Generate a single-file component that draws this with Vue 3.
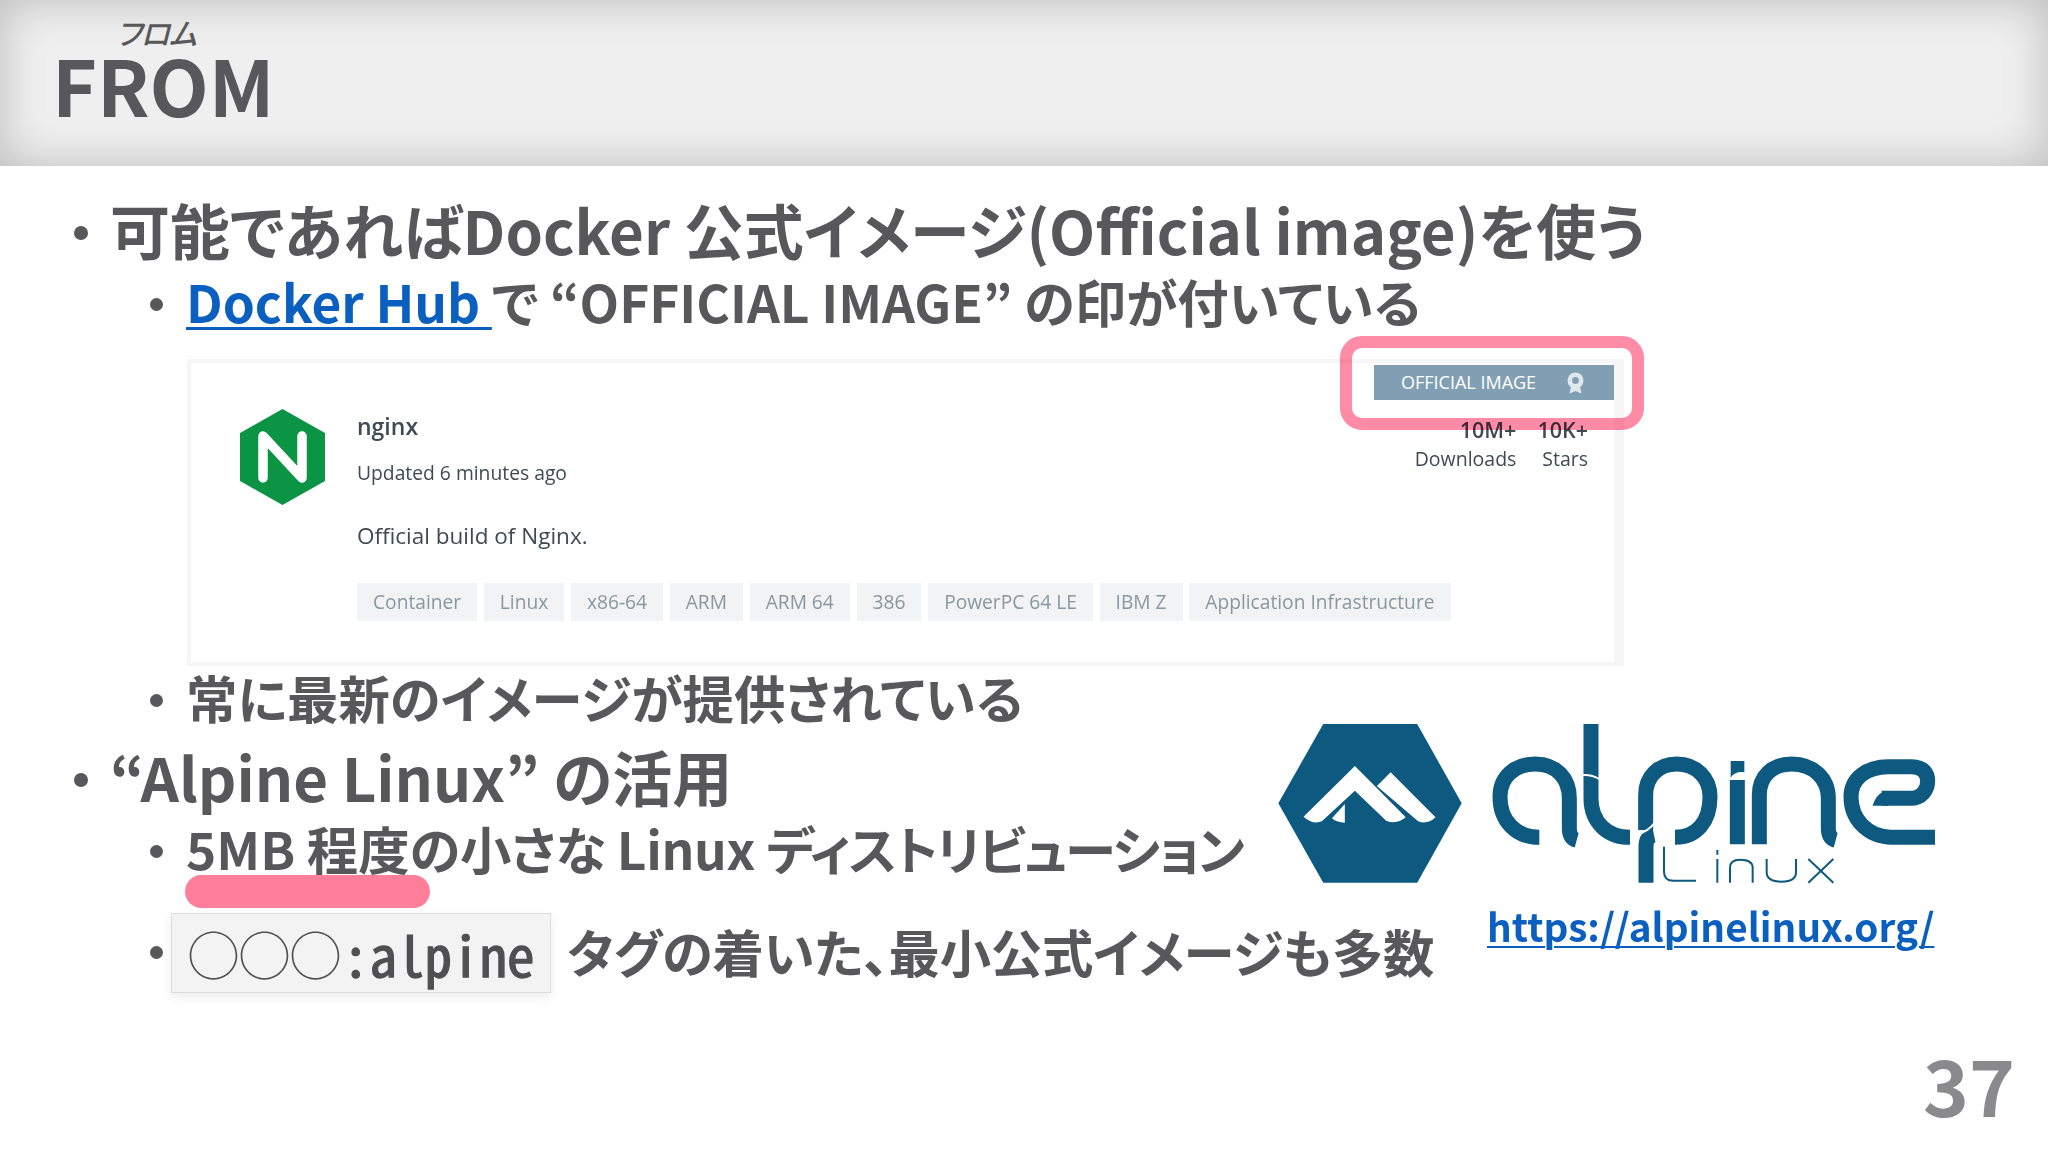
<script setup>
const tags = ['Container','Linux','x86-64','ARM','ARM 64','386','PowerPC 64 LE','IBM Z','Application Infrastructure']
</script>

<template>
  <div class="slide">
    <header class="head">
      <h1><ruby>FROM<rt>フロム</rt></ruby></h1>
    </header>
    <main class="body">
      <ul class="l1">
        <li>
          可能であればDocker 公式イメージ(Official image)を使う
          <ul class="l2">
            <li><span><a href="#" class="link">Docker Hub </a>で “OFFICIAL IMAGE” の印が付いている</span></li>
          </ul>
          <div class="card">
            <svg class="ngx" viewBox="0 0 85 96">
              <path d="M42.5 0 85 24v48L42.5 96 0 72V24z" fill="#0a9443"/>
              <path d="M23 69V27l39 42V27" fill="none" stroke="#fff" stroke-width="9.5" stroke-linecap="round" stroke-linejoin="round"/>
            </svg>
            <div class="info">
              <div class="name">nginx</div>
              <div class="upd">Updated 6 minutes ago</div>
              <div class="desc">Official build of Nginx.</div>
              <div class="tags"><span v-for="t in tags" :key="t" class="tag">{{ t }}</span></div>
            </div>
            <div class="side">
              <div class="badge">
                <span>OFFICIAL IMAGE</span>
                <svg width="19" height="22" viewBox="0 0 19 22">
                  <path d="M5 15 3.5 21.5 9.5 19l6 2.5L14 15z" fill="#dfe8ed"/>
                  <circle cx="9.5" cy="8.5" r="8" fill="#dfe8ed"/>
                  <circle cx="9.5" cy="8.5" r="3.4" fill="#819fb3"/>
                </svg>
              </div>
              <div class="stats">
                <div class="stat"><b>10M+</b><span>Downloads</span></div>
                <div class="stat"><b>10K+</b><span>Stars</span></div>
              </div>
            </div>
            <div class="ring"></div>
          </div>
          <ul class="l2 after">
            <li>常に最新のイメージが提供されている</li>
          </ul>
        </li>
        <li class="second">
          “Alpine Linux” の活用
          <ul class="l2">
            <li><span><span class="mark">5MB 程度</span><span class="mid">の小さな Linux </span><span class="kana">ディストリビューション</span></span></li>
            <li class="codeline"><code><span class="circles">◯◯◯</span>:alpine</code><span class="tagline">タグの着いた、最小公式イメージも多数</span></li>
          </ul>
        </li>
      </ul>
    </main>
    <aside class="alpine">
      <div class="marks">
        <svg class="hex" viewBox="0 0 480 840" preserveAspectRatio="none">
          <path d="M138 72H343L440 310 343 548H138L40 310Z" fill="#0d597f"/>
          <path d="M207 198 95 350Q115 375 135 364L207 272 275 362Q298 375 318 352Z" fill="#fff"/>
          <path d="M285 217 255 258 345 364Q365 375 383 352Z" fill="#fff"/>
          <path d="M185 312 157 355Q168 368 185 368Z" fill="#fff"/>
        </svg>
        <svg class="word" viewBox="0 0 1410 540">
          <g fill="none" stroke="#0d597f" stroke-width="45">
            <path d="M178 367C110 367 60 320 60 245 60 185 105 147 165 147 230 147 268 190 268 250V340Q268 370 290 376"/>
            <path d="M333 27V250C333 320 380 367 450 367"/>
            <path d="M497 345V240C497 185 535 147 590 147 650 147 690 190 690 245 690 320 650 367 585 367"/>
            <path d="M498 503V395Q498 365 522 360"/>
            <path d="M772 195V388"/>
            <path d="M838 388V240C838 185 875 147 935 147 1000 147 1045 190 1045 250V340Q1045 370 1067 376"/>
            <path d="M1365 367H1240C1160 367 1113 310 1113 245 1113 190 1160 155 1225 155H1295C1330 155 1343 175 1343 198 1343 225 1325 250 1290 250H1205"/>
          </g>
          <path d="M1178 272Q1190 230 1225 228V272Z" fill="#0d597f"/>
          <path d="M752 138H793V172Q765 168 752 188Z" fill="#0d597f"/>
          <path d="M308 180Q335 178 358 192M470 358Q505 350 525 322" fill="none" stroke="#fff" stroke-width="6"/>
          <g fill="none" stroke="#0d597f" stroke-width="6">
            <path d="M552 395V470Q552 497 580 497H648"/>
            <path d="M712 432V503M712 405V419"/>
            <path d="M750 503V458Q750 434 780 434 818 434 818 458V503"/>
            <path d="M860 432V472Q860 500 905 500 948 500 948 472V432"/>
            <path d="M985 432 1060 503M1060 432 985 503"/>
          </g>
        </svg>
      </div>
      <a href="#" class="link url">https://alpinelinux.org/</a>
    </aside>
    <footer class="page">37</footer>
  </div>
</template>

<style>
html, body { margin: 0; background: #fff; }
</style>

<style scoped>
.slide {
  width: 2048px;
  height: 1152px;
  position: relative;
  overflow: hidden;
  background: #fff;
  color: #58585a;
  font-family: "Noto Sans CJK JP", "Noto Sans", sans-serif;
  font-weight: 700;
  font-feature-settings: "palt";
}
.head {
  height: 166px;
  box-sizing: border-box;
  background: #efefef;
  box-shadow: inset 0 0 46px rgba(0,0,0,.22);
  padding: 18px 0 0 52px;
}
h1 { margin: 0; font-size: 77px; line-height: 1.25; font-weight: 700; }
ruby { ruby-align: center; }
rt { font-size: 30px; font-style: italic; font-weight: 500; line-height: 1; letter-spacing: -1px; ruby-align: center; padding-right: 14px; }
.body { padding-top: 24px; }
ul { list-style: none; margin: 0; padding: 0; }
.l1 { padding-left: 110px; font-size: 60px; line-height: 78px; }
.l1 > li { position: relative; }
.l1 > li::before {
  content: ""; position: absolute; left: -36px; top: 36px;
  width: 14px; height: 14px; border-radius: 50%; background: currentColor;
}
.l2 { font-size: 51.4px; line-height: 66px; padding-left: 76px; margin-left: 0; }
.l2 > li { position: relative; }
.l2 > li::before {
  content: ""; position: absolute; left: -36px; top: 30px;
  width: 13px; height: 13px; border-radius: 50%; background: currentColor;
}
.link { color: #0b60bf; text-decoration: underline; text-decoration-thickness: 3px; text-underline-offset: 4px; }
.card {
  position: relative;
  box-sizing: border-box;
  width: 1437px;
  height: 307px;
  margin: 25px 0 0 77px;
  border: 4px solid #f6f6f7;
  border-right-width: 10px;
  display: flex;
  font-family: "Open Sans", sans-serif;
  font-weight: 400;
  font-feature-settings: normal;
  color: #3e4a54;
  filter: blur(.4px);
}
.ngx { width: 85px; height: 96px; margin: 46px 32px 0 49px; flex: none; }
.info { padding-top: 47px; flex: none; width: 1100px; }
.name { font-size: 23px; line-height: 32px; font-weight: 600; }
.upd { font-size: 19.3px; line-height: 28px; margin-top: 17px; }
.desc { font-size: 22.5px; line-height: 32px; margin-top: 33px; }
.tags { display: flex; gap: 6.7px; margin-top: 31px; white-space: nowrap; }
.tag { height: 38px; line-height: 38px; padding: 0 16px; background: #f1f3f4; color: #8b979f; font-size: 19.2px; }
.side { position: absolute; right: 0; top: 2px; width: 240px; }
.badge {
  height: 35px; width: 240px; background: #819fb3; color: #fff;
  font-size: 18px; font-weight: 400; line-height: 35px; display: flex; align-items: center; justify-content: space-between;
  box-sizing: border-box; padding: 0 29px 0 27px;
}
.stats { display: flex; justify-content: flex-end; gap: 21px; padding-right: 26px; margin-top: 15px; }
.stat { display: flex; flex-direction: column; align-items: flex-end; font-size: 19.5px; line-height: 29px; white-space: nowrap; }
.stat b { font-weight: 600; font-size: 21.5px; }
.ring {
  position: absolute; left: 1149px; top: -27px; width: 304px; height: 94px; box-sizing: border-box;
  border: 12px solid #ff8ba7; border-radius: 22px; mix-blend-mode: multiply;
}
.after { margin-top: -2px; }
.second { margin-top: 7px; }
.mark { position: relative; display: inline-block; }
.mark::after {
  content: ""; position: absolute; left: -1px; right: -20px; top: 60px; height: 33px;
  border-radius: 17px; background: #ff7f9b;
}
.mid { letter-spacing: -.36px; }
.kana { letter-spacing: -1.9px; }
.codeline { display: flex; align-items: center; margin-top: 32px; }
.l2 > .codeline::before { top: 33px; }
.tagline { letter-spacing: -.25px; padding-bottom: 4px; }
code {
  margin-left: -15px; margin-right: 16px;
  box-sizing: border-box; width: 380px; height: 80px; padding-left: 16px;
  display: flex; align-items: center;
  background: #f3f3f3; border: 1px solid #dcdcdc;
  box-shadow: 0 4px 10px rgba(0,0,0,.08);
  font-family: "Noto Sans Mono CJK JP", "DejaVu Sans Mono", monospace;
  font-size: 55px; font-weight: 500; color: #505052; font-feature-settings: normal;
  -webkit-text-stroke: 1.3px #505052;
}
.circles { font-family: "Noto Sans CJK JP", sans-serif; font-size: 51px; font-weight: 400; margin-right: 1px; -webkit-text-stroke: 0; }
.alpine { position: absolute; left: 1260px; top: 700px; width: 720px; }
.marks { display: flex; align-items: flex-start; }
.hex { display: block; width: 220px; height: 280px; flex: none; }
.word { display: block; width: 470px; height: 180px; margin-top: 15px; flex: none; }
.url { position: absolute; left: 227px; top: 195px; font-size: 38.7px; line-height: 60px; white-space: nowrap; text-decoration-thickness: 2px; }
.page { position: absolute; right: 33px; bottom: 21px; font-size: 78px; line-height: 96px; color: #8a8a8c; }
</style>
